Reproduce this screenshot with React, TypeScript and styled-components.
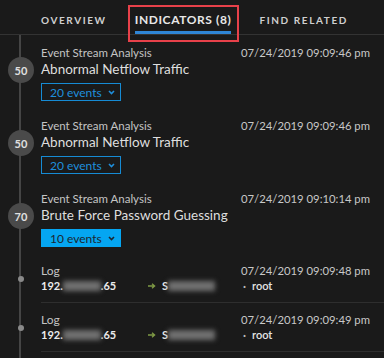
import React from 'react'
import styled, { createGlobalStyle } from 'styled-components'

const GlobalStyle = createGlobalStyle`
  html, body {
    margin: 0;
    padding: 0;
    background: #1a1a1a;
    overflow: hidden;
  }
  * {
    box-sizing: border-box;
  }
`

const Panel = styled.div`
  width: 384px;
  height: 358px;
  background: #1a1a1a;
  font-family: Lato, 'Open Sans', sans-serif;
  color: #d6d6d6;
  overflow: hidden;
  display: flex;
  flex-direction: column;
`

const TabBar = styled.div`
  display: flex;
  height: 35px;
  padding-left: 27px;
  border-bottom: 1px solid #333333;
  flex-shrink: 0;
`

const Tab = styled.div<{ $active?: boolean }>`
  position: relative;
  height: 100%;
  padding: 0 14px;
  display: flex;

  &::after {
    content: '';
    display: ${(p) => (p.$active ? 'block' : 'none')};
    position: absolute;
    left: 7px;
    right: 6px;
    top: 5px;
    bottom: -8px;
    border: 2px solid #e8414a;
    pointer-events: none;
  }
`

const TabLabel = styled.span<{ $active?: boolean }>`
  display: flex;
  align-items: center;
  padding-top: 8px;
  border-bottom: 3px solid ${(p) => (p.$active ? '#2f86d6' : 'transparent')};
  font-weight: bold;
  font-size: ${(p) => (p.$active ? '12px' : '10px')};
  letter-spacing: ${(p) => (p.$active ? '0.6px' : '1.6px')};
  color: ${(p) => (p.$active ? '#e8e8e8' : '#cfcfcf')};
  white-space: nowrap;
`

const List = styled.div`
  flex: 1;
  background-image: linear-gradient(
    to right,
    transparent 19px,
    #454545 19px,
    #454545 21px,
    transparent 21px
  );
`

const Item = styled.div`
  display: flex;
`

const Gutter = styled.div<{ $center?: boolean }>`
  width: 41px;
  flex-shrink: 0;
  display: flex;
  flex-direction: column;
  align-items: center;
  justify-content: ${(p) => (p.$center ? 'center' : 'flex-start')};
  padding-top: ${(p) => (p.$center ? '0' : '22px')};
  padding-left: 1px;
`

const Score = styled.div`
  width: 26px;
  height: 26px;
  border-radius: 50%;
  background: #4a4a4a;
  color: #e0e0e0;
  font-size: 11px;
  font-weight: bold;
  display: flex;
  align-items: center;
  justify-content: center;
`

const Dot = styled.div`
  width: 6px;
  height: 6px;
  border-radius: 50%;
  background: #8a8a8a;
`

const Body = styled.div<{ $log?: boolean }>`
  flex: 1;
  min-width: 0;
  padding: ${(p) => (p.$log ? '9px 14px 9px 0' : '10px 14px 7px 0')};
  border-bottom: ${(p) => (p.$log ? '1px solid #2e2e2e' : 'none')};
`

const HeadRow = styled.div`
  display: flex;
  justify-content: space-between;
  align-items: baseline;
  line-height: 15px;
`

const Source = styled.span<{ $log?: boolean }>`
  font-size: ${(p) => (p.$log ? '12px' : '11.5px')};
  color: #c4c4c4;
  white-space: nowrap;
`

const Stamp = styled.span`
  font-size: 11.3px;
  color: #c8c8c8;
  white-space: nowrap;
  text-align: right;
`

const Title = styled.div`
  font-size: 13.5px;
  line-height: 18px;
  color: #dedede;
  white-space: nowrap;
`

const EventsButton = styled.div<{ $filled?: boolean }>`
  margin-top: 5px;
  width: 80px;
  height: 18px;
  display: flex;
  align-items: center;
  padding-left: 8px;
  gap: 6px;
  font-size: 12px;
  border: 1px solid ${(p) => (p.$filled ? '#05a6f2' : '#168bd4')};
  background: ${(p) => (p.$filled ? '#05a6f2' : 'transparent')};
  color: ${(p) => (p.$filled ? '#1c2630' : '#1f8fdc')};
`

const LogGrid = styled.div`
  display: grid;
  grid-template-columns: 105px 95px 1fr;
  line-height: 15px;
  font-size: 11px;
`

const Strong = styled.span`
  font-weight: bold;
  color: #ececec;
  display: flex;
  align-items: center;
  white-space: nowrap;
`

const Hidden = styled.span<{ $w: number }>`
  display: inline-block;
  width: ${(p) => p.$w}px;
  height: 10px;
  background: #707070;
  filter: blur(2.5px);
`

const Arrow = styled.svg`
  width: 8px;
  height: 6px;
  margin-right: 6px;
  margin-left: 2px;
`

const UserCell = styled.span`
  display: flex;
  align-items: center;
  gap: 6px;
  padding-left: 2px;
  color: #e4e4e4;
  font-weight: 600;

  i {
    font-style: normal;
    color: #bbbbbb;
    font-weight: bold;
  }
`

const Chevron = () => (
  <svg width="7" height="5" viewBox="0 0 7 5">
    <polyline points="1,1 3.5,3.5 6,1" fill="none" stroke="currentColor" strokeWidth="1.6" />
  </svg>
)

const indicators = [
  { score: 50, title: 'Abnormal Netflow Traffic', time: '07/24/2019 09:09:46 pm', events: 20 },
  { score: 50, title: 'Abnormal Netflow Traffic', time: '07/24/2019 09:09:46 pm', events: 20 },
  { score: 70, title: 'Brute Force Password Guessing', time: '07/24/2019 09:10:14 pm', events: 10, active: true },
]

const logs = ['07/24/2019 09:09:48 pm', '07/24/2019 09:09:49 pm']

const App = () => {
  return (
    <>
      <GlobalStyle />
      <Panel>
        <TabBar>
          <Tab>
            <TabLabel>OVERVIEW</TabLabel>
          </Tab>
          <Tab $active>
            <TabLabel $active>INDICATORS (8)</TabLabel>
          </Tab>
          <Tab>
            <TabLabel>FIND RELATED</TabLabel>
          </Tab>
        </TabBar>
        <List>
          {indicators.map((it, i) => (
            <Item key={i}>
              <Gutter>
                <Score>{it.score}</Score>
              </Gutter>
              <Body>
                <HeadRow>
                  <Source>Event Stream Analysis</Source>
                  <Stamp>{it.time}</Stamp>
                </HeadRow>
                <Title>{it.title}</Title>
                <EventsButton $filled={it.active}>
                  {it.events} events
                  <Chevron />
                </EventsButton>
              </Body>
            </Item>
          ))}
          {logs.map((time, i) => (
            <Item key={'log' + i}>
              <Gutter $center>
                <Dot />
              </Gutter>
              <Body $log>
                <LogGrid>
                  <Source $log>Log</Source>
                  <span />
                  <Stamp>{time}</Stamp>
                  <Strong>
                    192.<Hidden $w={38} />.65
                  </Strong>
                  <Strong>
                    <Arrow viewBox="0 0 8 6">
                      <path d="M0 3 H6 M4 0.8 L6.6 3 L4 5.2" fill="none" stroke="#7f9a45" strokeWidth="1.3" />
                    </Arrow>
                    S<Hidden $w={47} />
                  </Strong>
                  <UserCell>
                    <i>·</i>root
                  </UserCell>
                </LogGrid>
              </Body>
            </Item>
          ))}
        </List>
      </Panel>
    </>
  )
}

export default App
